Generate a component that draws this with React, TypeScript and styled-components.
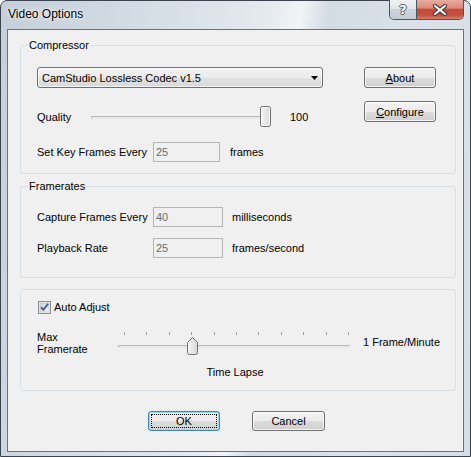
import React from "react";
import styled, { createGlobalStyle } from "styled-components";

const Global = createGlobalStyle`
  html, body { margin: 0; padding: 0; background: #ffffff; }
  body { font-family: "Liberation Sans", Arial, sans-serif; font-size: 11px; color: #000; }
  * { box-sizing: border-box; }
`;

const Window = styled.div`
  width: 471px;
  height: 457px;
  border: 1px solid #3b444e;
  border-radius: 7px 7px 0 0;
  background: linear-gradient(100deg, #c4cfda 0%, #d5dde5 28%, #e4e9ee 48%, #f1f4f6 55%, #d3dbe3 60%, #dbe2e9 78%, #d6dee6 100%);
  display: flex;
  flex-direction: column;
  padding: 0 6px 4px 6px;
`;

const TitleBar = styled.div`
  height: 28px;
  display: flex;
  align-items: flex-start;
  padding-left: 1px;
`;

const Title = styled.div`
  margin-top: 6px;
  font-family: "Liberation Sans", Arial, sans-serif;
  font-size: 12px;
  line-height: 15px;
  color: #000;
  text-shadow: 0 0 6px rgba(255, 255, 255, 0.95), 0 0 2px rgba(255, 255, 255, 0.9);
`;

const Captions = styled.div`
  margin-left: auto;
  margin-top: -1px;
  height: 20px;
  display: flex;
  border: 1px solid #4b5661;
  border-top: none;
  border-radius: 0 0 5px 5px;
  overflow: hidden;
`;

const HelpBtn = styled.div`
  width: 27px;
  height: 100%;
  border-right: 1px solid #4b5661;
  background: linear-gradient(#eef1f4 0%, #e1e6eb 45%, #cdd4db 50%, #c4ccd4 100%);
  display: flex;
  align-items: center;
  justify-content: center;
`;

const HelpGlyph = styled.span`
  font-family: "DejaVu Sans", sans-serif;
  font-weight: bold;
  font-size: 13px;
  line-height: 13px;
  color: #ffffff;
  text-shadow: 1px 0 0 #4e5965, -1px 0 0 #4e5965, 0 1px 0 #4e5965, 0 -1px 0 #4e5965;
`;

const CloseBtn = styled.div`
  width: 46px;
  height: 100%;
  background: linear-gradient(#e9ab9d 0%, #dc8a77 42%, #c6493a 50%, #c4503e 80%, #d8806a 100%);
  display: flex;
  align-items: center;
  justify-content: center;
`;

const Client = styled.div`
  flex: 1;
  border: 1px solid #68737e;
  background: #f0f0f0;
  padding: 0 7px 0 12px;
  display: flex;
  flex-direction: column;
`;

const Group = styled.fieldset<{ $mt: number; $pt: number; $pb: number }>`
  margin: ${(p) => p.$mt}px 0 0 0;
  padding: ${(p) => p.$pt}px 19px ${(p) => p.$pb}px 16px;
  border: 1px solid #d5dfe5;
  border-radius: 3px;
  min-width: 0;
`;

const Legend = styled.legend`
  padding: 0 1px;
  margin-left: -9px;
  font-size: 11px;
  line-height: 13px;
`;

const CompressorBody = styled.div`
  display: grid;
  grid-template-columns: 1fr 72px;
  align-items: start;
`;

const Column = styled.div`
  display: flex;
  flex-direction: column;
`;

const ButtonColumn = styled.div`
  display: flex;
  flex-direction: column;
  gap: 13px;
`;

const Row = styled.div<{ $mt?: number }>`
  margin-top: ${(p) => p.$mt ?? 0}px;
  height: 21px;
  display: flex;
  align-items: center;
`;

const Label = styled.div<{ $w: number }>`
  width: ${(p) => p.$w}px;
  flex: none;
  white-space: nowrap;
`;

const Value = styled.div<{ $ml: number }>`
  margin-left: ${(p) => p.$ml}px;
  white-space: nowrap;
`;

const Combo = styled.div`
  width: 286px;
  height: 21px;
  display: flex;
  align-items: center;
  justify-content: space-between;
  padding: 0 4px 0 4px;
  border: 1px solid #707070;
  border-radius: 3px;
  background: linear-gradient(#f2f2f2 0%, #ebebeb 50%, #e2e2e2 51%, #d8d8d8 100%);
  box-shadow: inset 0 0 0 1px rgba(255, 255, 255, 0.7);
`;

const TextBox = styled.div<{ $w: number }>`
  width: ${(p) => p.$w}px;
  height: 20px;
  display: flex;
  align-items: center;
  padding-left: 2px;
  border: 1px solid #b4b4b4;
  background: #f0f0f0;
  color: #6d6d6d;
`;

const Button = styled.div<{ $w: number; $h: number; $default?: boolean }>`
  position: relative;
  width: ${(p) => p.$w}px;
  height: ${(p) => p.$h}px;
  display: flex;
  align-items: center;
  justify-content: center;
  border: 1px solid ${(p) => (p.$default ? "#3c7fb1" : "#707070")};
  border-radius: 3px;
  background: linear-gradient(#f2f2f2 0%, #ebebeb 50%, #dddddd 51%, #cfcfcf 100%);
  box-shadow: inset 0 0 0 1px ${(p) => (p.$default ? "#9fdcf6" : "rgba(255,255,255,0.75)")};
  u { text-underline-offset: 1px; }
  ${(p) =>
    p.$default
      ? `&::after { content: ""; position: absolute; inset: 2px; border: 1px dotted #000; }`
      : ""}
`;

const SliderBox = styled.div<{ $w: number; $h: number }>`
  position: relative;
  width: ${(p) => p.$w}px;
  height: ${(p) => p.$h}px;
  flex: none;
`;

const Track = styled.div<{ $top: number }>`
  position: absolute;
  left: 0;
  right: 2px;
  top: ${(p) => p.$top}px;
  height: 3px;
  border: 1px solid #b9b9b9;
  border-right-color: #e6e6e6;
  border-bottom-color: #e6e6e6;
  background: #e7eaea;
`;

const Thumb = styled.svg`
  position: absolute;
`;

const Ticks = styled.div`
  position: absolute;
  left: 6px;
  right: 3px;
  top: 1px;
  height: 3px;
  display: flex;
  justify-content: space-between;
`;

const Tick = styled.span`
  width: 1px;
  height: 3px;
  background: #a0a0a0;
`;

const CheckRow = styled.div`
  height: 13px;
  display: flex;
  align-items: center;
  padding-left: 1px;
`;

const CheckLabel = styled.span`
  margin-left: 3px;
  line-height: 13px;
`;

const LapseGrid = styled.div`
  margin-top: 17px;
  display: grid;
  grid-template-columns: 81px 234px 1fr;
  grid-template-rows: 26px auto;
`;

const TwoLine = styled.div`
  line-height: 12px;
`;

const SideLabel = styled.div`
  padding-left: 11px;
  margin-top: 5px;
  line-height: 12px;
  white-space: nowrap;
`;

const Caption = styled.div`
  grid-column: 2;
  margin-top: 9px;
  line-height: 12px;
  text-align: center;
`;

const ButtonBar = styled.div`
  margin-top: 20px;
  display: flex;
  justify-content: center;
  gap: 32px;
  padding-right: 3px;
`;

function QualitySlider({ value }: { value: number }) {
  const width = 182;
  const left = ((width - 13) * value) / 100;
  return (
    <SliderBox $w={width} $h={21}>
      <Track $top={10} />
      <Thumb width="11" height="21" style={{ left, top: 0 }} viewBox="0 0 11 21">
        <defs>
          <linearGradient id="qt" x1="0" x2="1" y1="0" y2="0">
            <stop offset="0" stopColor="#f7f7f7" />
            <stop offset="1" stopColor="#d9d9d9" />
          </linearGradient>
        </defs>
        <rect x="0.5" y="0.5" width="10" height="20" rx="2" fill="url(#qt)" stroke="#707070" />
        <rect x="1.5" y="1.5" width="8" height="18" rx="1" fill="none" stroke="#ffffff" strokeOpacity="0.8" />
      </Thumb>
    </SliderBox>
  );
}

function LapseSlider({ pos }: { pos: number }) {
  return (
    <SliderBox $w={234} $h={26}>
      <Ticks>
        {Array.from({ length: 11 }).map((_, i) => (
          <Tick key={i} />
        ))}
      </Ticks>
      <Track $top={14} />
      <Thumb width="11" height="18" style={{ left: pos, top: 6 }} viewBox="0 0 11 18">
        <defs>
          <linearGradient id="lt" x1="0" x2="1" y1="0" y2="0">
            <stop offset="0" stopColor="#f7f7f7" />
            <stop offset="1" stopColor="#d6d6d6" />
          </linearGradient>
        </defs>
        <path d="M0.5 5.5 L5.5 0.5 L10.5 5.5 V15.5 Q10.5 17.5 8.5 17.5 H2.5 Q0.5 17.5 0.5 15.5 Z" fill="url(#lt)" stroke="#707070" />
      </Thumb>
    </SliderBox>
  );
}

function CheckBox() {
  return (
    <svg width="13" height="13" viewBox="0 0 13 13">
      <defs>
        <linearGradient id="cb" x1="0" y1="0" x2="1" y2="1">
          <stop offset="0" stopColor="#cfd2d6" />
          <stop offset="1" stopColor="#f4f5f6" />
        </linearGradient>
      </defs>
      <rect x="0.5" y="0.5" width="12" height="12" fill="#f4f4f4" stroke="#8f8f8f" />
      <rect x="2" y="2" width="9" height="9" fill="url(#cb)" stroke="#b9bec4" strokeWidth="0.6" />
      <path d="M3 6.2 L5.3 8.8 L10.2 2.8" fill="none" stroke="#3d5a9a" strokeWidth="1.8" />
    </svg>
  );
}

export default function App() {
  return (
    <>
      <Global />
      <Window>
        <TitleBar>
          <Title>Video Options</Title>
          <Captions>
            <HelpBtn>
              <HelpGlyph>?</HelpGlyph>
            </HelpBtn>
            <CloseBtn>
              <svg width="16" height="12" viewBox="0 0 16 12">
                <path d="M3 2 L13 10 M13 2 L3 10" stroke="#3f3f3f" strokeWidth="4.2" strokeLinecap="round" />
                <path d="M3 2 L13 10 M13 2 L3 10" stroke="#ffffff" strokeWidth="2.2" strokeLinecap="round" />
              </svg>
            </CloseBtn>
          </Captions>
        </TitleBar>
        <Client>
          <Group $mt={9} $pt={15} $pb={11}>
            <Legend>Compressor</Legend>
            <CompressorBody>
              <Column>
                <Combo>
                  <span>CamStudio Lossless Codec v1.5</span>
                  <svg width="7" height="4" viewBox="0 0 7 4">
                    <path d="M0 0 H7 L3.5 4 Z" fill="#000" />
                  </svg>
                </Combo>
                <Row $mt={18}>
                  <Label $w={54}>Quality</Label>
                  <QualitySlider value={100} />
                  <Value $ml={17}>100</Value>
                </Row>
                <Row $mt={14}>
                  <Label $w={116}>Set Key Frames Every</Label>
                  <TextBox $w={67}>25</TextBox>
                  <Value $ml={10}>frames</Value>
                </Row>
              </Column>
              <ButtonColumn>
                <Button $w={72} $h={21}>
                  <span>
                    <u>A</u>bout
                  </span>
                </Button>
                <Button $w={72} $h={21}>
                  <span>
                    <u>C</u>onfigure
                  </span>
                </Button>
              </ButtonColumn>
            </CompressorBody>
          </Group>

          <Group $mt={6} $pt={13} $pb={19}>
            <Legend>Framerates</Legend>
            <Row>
              <Label $w={116}>Capture Frames Every</Label>
              <TextBox $w={70}>40</TextBox>
              <Value $ml={9}>milliseconds</Value>
            </Row>
            <Row $mt={10}>
              <Label $w={116}>Playback Rate</Label>
              <TextBox $w={70}>25</TextBox>
              <Value $ml={9}>frames/second</Value>
            </Row>
          </Group>

          <Group $mt={11} $pt={11} $pb={12}>
            <CheckRow>
              <CheckBox />
              <CheckLabel>Auto Adjust</CheckLabel>
            </CheckRow>
            <LapseGrid>
              <TwoLine>
                Max
                <br />
                Framerate
              </TwoLine>
              <LapseSlider pos={69} />
              <SideLabel>1 Frame/Minute</SideLabel>
              <Caption>Time Lapse</Caption>
            </LapseGrid>
          </Group>

          <ButtonBar>
            <Button $w={72} $h={20} $default>
              OK
            </Button>
            <Button $w={73} $h={20}>
              Cancel
            </Button>
          </ButtonBar>
        </Client>
      </Window>
    </>
  );
}
